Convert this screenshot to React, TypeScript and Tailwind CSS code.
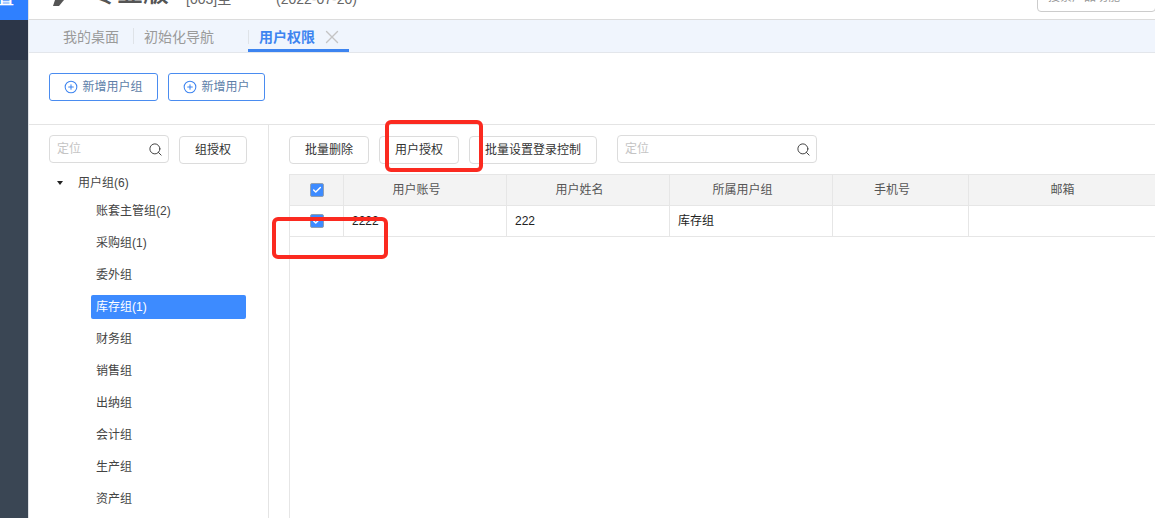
import { CirclePlus, Search, X, Check } from 'lucide-react'

const FONT = "font-['Liberation_Sans','Noto_Sans_CJK_SC',sans-serif]"

const groups = [
  { name: '账套主管组(2)' },
  { name: '采购组(1)' },
  { name: '委外组' },
  { name: '库存组(1)', active: true },
  { name: '财务组' },
  { name: '销售组' },
  { name: '出纳组' },
  { name: '会计组' },
  { name: '生产组' },
  { name: '资产组' },
]

const columns = [
  { title: '用户账号', width: 'w-[163px] pr-[17px]', cell: 'w-[163px]', value: '2222' },
  { title: '用户姓名', width: 'w-[163px] pr-[17px]', cell: 'w-[163px]', value: '222' },
  { title: '所属用户组', width: 'w-[163px] pr-[17px]', cell: 'w-[163px]', value: '库存组' },
  { title: '手机号', width: 'w-[136px] pr-[17px]', cell: 'w-[136px]', value: '' },
  { title: '邮箱', width: 'w-[187px]', cell: 'w-[187px]', value: '' },
]

function Locate({ width }: { width: string }) {
  return (
    <div className={`${width} h-[28px] shrink-0 flex items-center justify-between pl-[7px] pr-[5px] border border-[#dcdcdc] rounded-[4px] bg-white`}>
      <span className="text-xs text-[#c4c4c4]">定位</span>
      <Search className="w-[15px] h-[15px] text-[#444]" strokeWidth={1.6} />
    </div>
  )
}

function Btn({ children, width }: { children: string; width: string }) {
  return (
    <button className={`${width} h-[28px] mt-[1px] shrink-0 flex items-center justify-center whitespace-nowrap border border-[#dcdcdc] rounded-[4px] bg-white text-xs text-[#333]`}>
      {children}
    </button>
  )
}

function Tick() {
  return (
    <span className="w-[14px] h-[14px] flex items-center justify-center rounded-[2px] bg-[#3d8bff] border border-[#8fa0b5]">
      <Check className="w-[10px] h-[10px] text-white" strokeWidth={3.5} />
    </span>
  )
}

export default function App() {
  return (
    <div className={`${FONT} relative flex w-[1155px] h-[518px] overflow-hidden bg-white`}>
      {/* Sidebar */}
      <aside className="w-[28px] shrink-0 flex flex-col bg-[#3a4654]">
        <div className="h-[20px] bg-[#2f80ff] overflow-hidden flex items-end">
          <span className="-ml-[2px] text-white text-base font-bold leading-none mb-[13px]">置</span>
        </div>
        <div className="h-[40px] bg-[#2c3648]" />
      </aside>

      <main className="flex-1 min-w-0 flex flex-col border-l border-[#dfe2e6]">
        {/* Header, scrolled off at the top */}
        <header className="h-[20px] shrink-0 flex items-end overflow-hidden border-b border-[#dcdcdc] text-[#666]">
          <svg className="ml-[23px] mb-[13px] w-[12px] h-[6px] shrink-0" viewBox="0 0 12 6">
            <path d="M3 0h9L7 6H1z" fill="#555" />
          </svg>
          <span className="ml-[27px] w-[95px] text-[26px] leading-[26px] h-[26px] mb-[13px] shrink-0 font-medium text-[#555] whitespace-nowrap">专业版</span>
          <span className="text-sm leading-none mb-[13px] w-[90px] shrink-0">[003]主</span>
          <span className="text-sm leading-none mb-[13px] shrink-0">(2022-07-20)</span>
          <div className="ml-auto w-[119px] h-[30px] mb-[7px] -mr-px flex items-end pl-[10px] pb-[8px] border border-[#ccc] rounded-[4px] text-xs leading-none text-[#999]">
            搜索产品功能
          </div>
        </header>

        {/* Tabs */}
        <nav className="h-[33px] shrink-0 flex items-center bg-[#f0f5fd] border-b border-[#e3e6eb] text-sm text-[#9a9a9a]">
          <span className="ml-[34px] w-[70px] leading-none mt-[2px]">我的桌面</span>
          <span className="w-px h-[16px] bg-[#dfe3e8]" />
          <span className="ml-[10px] w-[104px] leading-none mt-[2px]">初始化导航</span>
          <div className="relative h-full w-[101px] flex items-center pl-[11px] gap-[6px]">
            <span className="absolute left-0 top-[10px] w-px h-[14px] bg-[#dfe3e8]" />
            <span className="font-bold text-[#3d84f0] leading-none mt-[2px]">用户权限</span>
            <X className="w-[22px] h-[22px] text-[#c4c4c4] mt-[2px]" strokeWidth={1.5} />
            <span className="absolute left-0 right-0 bottom-0 h-[3px] bg-[#3d84f0]" />
          </div>
        </nav>

        {/* Add buttons */}
        <div className="h-[72px] shrink-0 flex items-start gap-[10px] pt-[20px] pl-[20px] border-b border-[#e4e4e4]">
          <button className="w-[109px] h-[28px] flex items-center justify-center gap-[4px] border border-[#4a8cf0] rounded-[3px] text-xs text-[#5d7ea8]">
            <CirclePlus className="w-[14px] h-[14px] text-[#3d84f0]" strokeWidth={1.8} />
            新增用户组
          </button>
          <button className="w-[97px] h-[28px] flex items-center justify-center gap-[4px] border border-[#4a8cf0] rounded-[3px] text-xs text-[#5d7ea8]">
            <CirclePlus className="w-[14px] h-[14px] text-[#3d84f0]" strokeWidth={1.8} />
            新增用户
          </button>
        </div>

        <div className="flex-1 min-h-0 flex">
          {/* Group tree */}
          <section className="w-[240px] shrink-0 border-r border-[#e4e4e4] overflow-hidden">
            <div className="flex items-start gap-[10px] pl-[20px] pt-[10px]">
              <Locate width="w-[120px]" />
              <Btn width="w-[68px]">组授权</Btn>
            </div>
            <div className="flex items-center h-[20px] mt-[9px] pl-[28px] text-xs text-[#444]">
              <span className="w-0 h-0 border-x-[3.5px] border-x-transparent border-t-[4px] border-t-[#222]" />
              <span className="ml-[15px]">用户组(6)</span>
            </div>
            <ul className="mt-[2px] ml-[62px] w-[155px]">
              {groups.map((g) => (
                <li key={g.name} className="h-[32px] flex items-center">
                  <span className={`w-full h-[24px] flex items-center pl-[5px] rounded-[2px] text-xs ${g.active ? 'bg-[#3d8bff] text-white' : 'text-[#444]'}`}>
                    {g.name}
                  </span>
                </li>
              ))}
            </ul>
          </section>

          {/* User list */}
          <section className="flex-1 min-w-0 pl-[20px] pt-[10px] overflow-hidden">
            <div className="flex items-start">
              <Btn width="w-[80px]">批量删除</Btn>
              <div className="w-[10px]" />
              <Btn width="w-[80px]">用户授权</Btn>
              <div className="w-[10px]" />
              <Btn width="w-[128px]">批量设置登录控制</Btn>
              <div className="w-[20px]" />
              <Locate width="w-[200px]" />
            </div>
            <div className="mt-[10px] w-[866px] h-[400px] border-l border-[#e6e6e6]">
              <div className="flex h-[32px] bg-[#f3f3f3] border-y border-[#e6e6e6] text-xs text-[#555]">
                <div className="w-[54px] shrink-0 flex items-center justify-center border-r border-[#e6e6e6]">
                  <Tick />
                </div>
                {columns.map((c) => (
                  <div key={c.title} className={`${c.width} shrink-0 flex items-center justify-center border-r border-[#e6e6e6] last:border-r-0`}>
                    {c.title}
                  </div>
                ))}
              </div>
              <div className="flex h-[31px] border-b border-[#e6e6e6] text-xs text-[#222]">
                <div className="w-[54px] shrink-0 flex items-center justify-center border-r border-[#e6e6e6]">
                  <Tick />
                </div>
                {columns.map((c) => (
                  <div key={c.title} className={`${c.cell} shrink-0 flex items-center pl-[8px] border-r border-[#e6e6e6] last:border-r-0`}>
                    {c.value}
                  </div>
                ))}
              </div>
            </div>
          </section>
        </div>
      </main>

      {/* Red annotations drawn over the screenshot */}
      <div className="absolute left-[385px] top-[120px] w-[98px] h-[52px] border-[4px] border-[#fb2a20] rounded-[6px]" />
      <div className="absolute left-[272px] top-[217px] w-[116px] h-[42px] border-[4px] border-[#fb2a20] rounded-[6px]" />
    </div>
  )
}
